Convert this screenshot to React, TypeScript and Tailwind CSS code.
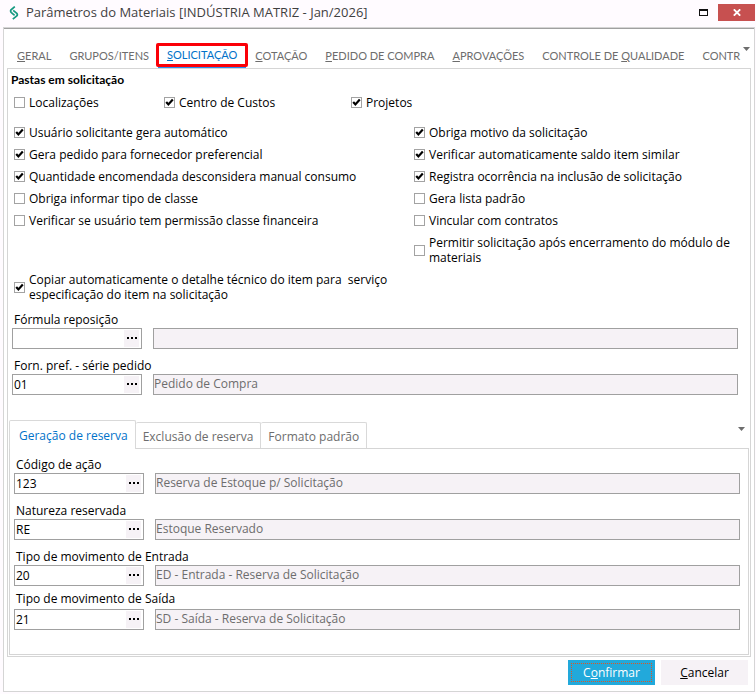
import type { ReactNode } from "react";

type CheckProps = {
  id: string;
  checked?: boolean;
  children: ReactNode;
};

function Check({ id, checked = false, children }: CheckProps) {
  return (
    <div className="flex items-center gap-1">
      <span className="relative size-[11px] shrink-0">
        <input
          id={id}
          type="checkbox"
          defaultChecked={checked}
          className="peer block size-[11px] appearance-none border border-[#a3a3a3] bg-white"
        />
        <svg
          viewBox="0 0 11 11"
          className="pointer-events-none absolute inset-0 hidden size-[11px] peer-checked:block"
        >
          <path d="M2.2 5 L4.4 7.4 L8.8 2.6" fill="none" stroke="#000" strokeWidth="2.2" />
        </svg>
      </span>
      <label htmlFor={id} className="whitespace-pre-wrap">
        {children}
      </label>
    </div>
  );
}

type LookupProps = {
  id: string;
  label: string;
  code?: string;
  description?: string;
  tall?: boolean;
};

function Lookup({ id, label, code = "", description = "", tall = false }: LookupProps) {
  return (
    <div className={`flex flex-col ${tall ? "gap-[3px]" : "gap-px"}`}>
      <label htmlFor={id} className="pl-0.5">
        {label}
      </label>
      <div className="flex gap-[11px]">
        <div className="flex h-[21px] w-[130px] shrink-0 border border-[#a0a0a0] bg-white py-px pr-0.5 pl-px">
          <input id={id} defaultValue={code} className="min-w-0 flex-1 outline-none" />
          <button
            type="button"
            aria-label={`Pesquisar ${label}`}
            className="flex w-[15px] items-center justify-center bg-[#f6f2f6] pb-px"
          >
            <svg viewBox="0 0 10 2" className="h-0.5 w-2.5">
              <path d="M0 0h2v2h-2z M4 0h2v2h-2z M8 0h2v2h-2z" />
            </svg>
          </button>
        </div>
        <input
          readOnly
          aria-label={`Descrição ${label}`}
          value={description}
          className="h-[21px] min-w-0 flex-1 border border-[#a0a0a0] bg-[#f6f2f6] pb-0.5 text-[#6d6d6d] outline-none"
        />
      </div>
    </div>
  );
}

function Caret() {
  return (
    <svg viewBox="0 0 7 4" className="h-1 w-[7px]">
      <path d="M0 0h7L3.5 4z" fill="#6d6d6d" />
    </svg>
  );
}

const tabs: { id: string; label: ReactNode; active?: boolean }[] = [
  { id: "geral", label: <><u>G</u>ERAL</> },
  { id: "grupos", label: "GRUPOS/ITENS" },
  { id: "solicitacao", label: <><u>S</u>OLICITAÇÃO</>, active: true },
  { id: "cotacao", label: <><u>C</u>OTAÇÃO</> },
  { id: "pedido", label: <><u>P</u>EDIDO DE COMPRA</> },
  { id: "aprovacoes", label: <><u>A</u>PROVAÇÕES</> },
  { id: "qualidade", label: <>CONTROLE DE <u>Q</u>UALIDADE</> },
  { id: "contr", label: "CONTR" },
];

export default function App() {
  return (
    <div className="flex min-h-screen flex-col bg-[#fffbff] pr-px pb-0.5 pl-[3px] font-['Open_Sans','Noto_Sans',sans-serif] text-[12px] leading-[15px] text-black">
      <header className="flex h-[27px] items-start justify-between">
        <div className="flex h-[25px] items-center gap-[7px] pl-1.5">
          <svg viewBox="0 0 10 14" className="h-3.5 w-2.5" fill="none" stroke="#159a80" strokeWidth="1.7">
            <path d="M5.8 0.6 L1.8 4 Q1.2 5.4 2.4 6.6 L5.6 9.4" />
            <path d="M4.2 4.4 L7.8 7.4 Q8.9 8.8 7.8 10 L3.8 13.2" />
          </svg>
          <h1 className="text-[13px] text-[#3f3f3f]">
            Parâmetros do Materiais [INDÚSTRIA MATRIZ - Jan/2026]
          </h1>
        </div>
        <div className="flex items-center gap-2.5 pt-1">
          <button type="button" aria-label="Maximizar">
            <svg viewBox="0 0 9 7" className="h-[7px] w-[9px]">
              <path d="M0 0h9v7H0z M1 2v4h7V2z" fill="#111" fillRule="evenodd" />
            </svg>
          </button>
          <button type="button" aria-label="Fechar" className="flex h-[17px] w-[37px] items-center justify-center bg-[#c75050]">
            <svg viewBox="0 0 8 7" className="h-[7px] w-2">
              <path d="M0.8 0.3 L7.2 6.7 M7.2 0.3 L0.8 6.7" stroke="#fff" strokeWidth="1.8" />
            </svg>
          </button>
        </div>
      </header>

      <div className="flex flex-1 flex-col border border-[#d5d5d5] bg-white">
        <div className="h-px bg-[#a0a0a0]" />
        <nav className="flex h-[39px] items-end px-1">
          <div className="flex min-w-0 flex-1 items-end font-['Lato','Open_Sans',sans-serif] text-[11px] whitespace-nowrap text-[#6d6d6d]">
            {tabs.map((tab) => (
              <button
                key={tab.id}
                type="button"
                className={
                  tab.active
                    ? "relative h-[25px] shrink-0 border-b-2 border-[#2a8dee] px-[9px] text-[#0072c9]"
                    : "h-[25px] shrink-0 px-[9px] last:pr-0"
                }
              >
                {tab.label}
                {tab.active ? (
                  <span className="absolute -inset-x-0.5 top-0 h-6 rounded-xs border-3 border-[#fb0007]" />
                ) : null}
              </button>
            ))}
          </div>
          <span className="self-center">
            <Caret />
          </span>
        </nav>

        <main className="mx-[3px] flex flex-1 flex-col border border-[#d5d5d5]">
          <h2 className="pt-[3px] pl-[3px] font-['Lato','Open_Sans',sans-serif] text-[12px] font-bold">Pastas em solicitação</h2>
          <div className="flex pt-2 pl-1.5">
            <div className="w-[150px]">
              <Check id="localizacoes">Localizações</Check>
            </div>
            <div className="w-[187px]">
              <Check id="centro" checked>Centro de Custos</Check>
            </div>
            <Check id="projetos" checked>Projetos</Check>
          </div>

          <div className="flex pt-[15px] pl-1.5">
            <div className="flex w-[400px] flex-col gap-[7px]">
              <Check id="usuario" checked>Usuário solicitante gera automático</Check>
              <Check id="gera-pedido" checked>Gera pedido para fornecedor preferencial</Check>
              <Check id="quantidade" checked>Quantidade encomendada desconsidera manual consumo</Check>
              <Check id="tipo-classe">Obriga informar tipo de classe</Check>
              <Check id="permissao">Verificar se usuário tem permissão classe financeira</Check>
            </div>
            <div className="flex max-w-[320px] flex-1 flex-col gap-[7px]">
              <Check id="motivo" checked>Obriga motivo da solicitação</Check>
              <Check id="saldo" checked>Verificar automaticamente saldo item similar</Check>
              <Check id="ocorrencia" checked>Registra ocorrência na inclusão de solicitação</Check>
              <Check id="lista">Gera lista padrão</Check>
              <Check id="contratos">Vincular com contratos</Check>
              <Check id="encerramento">Permitir solicitação após encerramento do módulo de materiais</Check>
            </div>
          </div>
          <div className="pt-[7px] pl-1.5">
            <Check id="copiar" checked>
              {"Copiar automaticamente o detalhe técnico do item para  serviço\nespecificação do item na solicitação"}
            </Check>
          </div>

          <div className="flex flex-col gap-[9px] pt-2.5 pr-3 pl-1">
            <Lookup id="formula" label="Fórmula reposição" />
            <Lookup id="forn" label="Forn. pref. - série pedido" code="01" description="Pedido de Compra" />
          </div>

          <div className="mx-px mt-auto mb-px flex flex-col pt-[25px]">
            <div className="flex items-end text-[#6d6d6d]">
              <button type="button" className="relative z-10 -mb-px h-[29px] rounded-t-xs border border-b-0 border-[#d9d9d9] bg-white pt-px pr-[7px] pl-[9px] text-[#0072c9]">
                Geração de reserva
              </button>
              <button type="button" className="h-[26px] rounded-t-xs border border-b-0 border-l-0 border-[#d9d9d9] px-[7px] pt-px">
                Exclusão de reserva
              </button>
              <button type="button" className="h-[26px] rounded-t-xs border border-b-0 border-l-0 border-[#d9d9d9] px-[7px] pt-px">
                Formato padrão
              </button>
              <span className="mr-1 mb-[17px] ml-auto">
                <Caret />
              </span>
            </div>
            <div className="flex flex-col gap-[9px] border border-[#d5d5d5] pt-2 pr-2 pb-6 pl-1">
              <Lookup id="acao" label="Código de ação" code="123" description="Reserva de Estoque p/ Solicitação" />
              <Lookup id="natureza" label="Natureza reservada" code="RE" description="Estoque Reservado" />
              <div className="flex flex-col gap-[5px]">
                <Lookup id="entrada" label="Tipo de movimento de Entrada" code="20" description="ED - Entrada - Reserva de Solicitação" />
                <Lookup id="saida" label="Tipo de movimento de Saída" code="21" description="SD - Saída - Reserva de Solicitação" tall />
              </div>
            </div>
          </div>
        </main>

        <footer className="flex justify-end gap-1.5 pt-[3px] pr-1.5 pb-1.5">
          <button type="button" className="h-[25px] w-[87px] bg-[#22a9db] p-[3px] text-white">
            <span className="flex h-full items-center justify-center border border-dotted border-[#dd5624]">
              <span>C<u>o</u>nfirmar</span>
            </span>
          </button>
          <button type="button" className="h-[25px] w-[87px] bg-[#f6f2f6]">
            <u>C</u>ancelar
          </button>
        </footer>
      </div>
    </div>
  );
}
